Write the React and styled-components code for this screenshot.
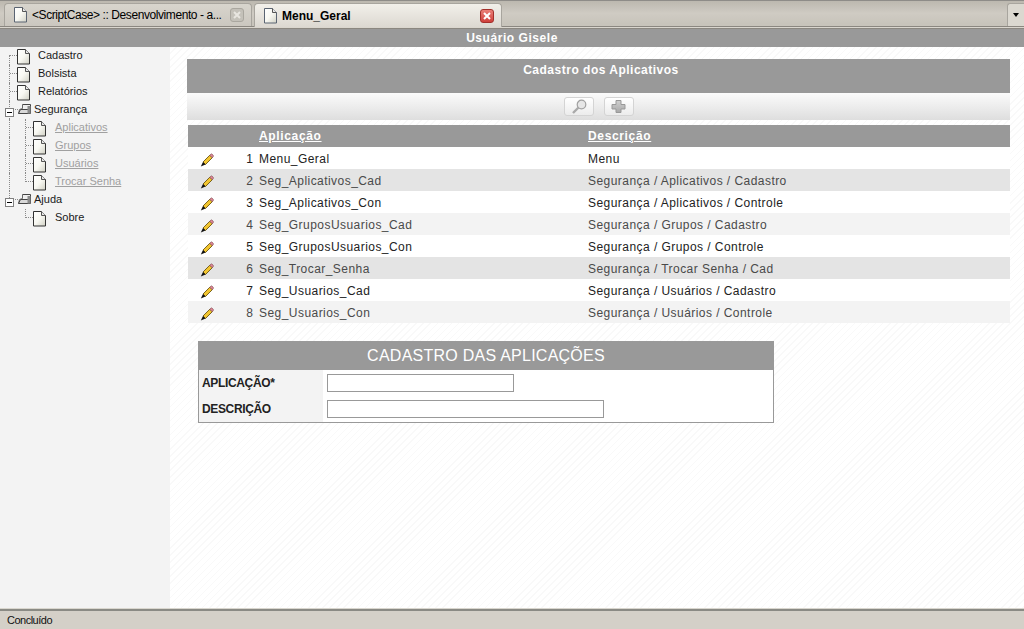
import React from 'react'
import styled, { createGlobalStyle } from 'styled-components'

const Global = createGlobalStyle`
  html, body { margin: 0; padding: 0; height: 100%; overflow: hidden; }
  body { font-family: "Liberation Sans", Arial, sans-serif; font-size: 12px; color: #000; }
  * { box-sizing: border-box; }
`

const Page = styled.div`
  width: 1024px;
  height: 629px;
  display: flex;
  flex-direction: column;
`

const TabBar = styled.div`
  height: 29px;
  display: flex;
  align-items: flex-end;
  padding: 0 0 2px 4px;
  gap: 2px;
  background: linear-gradient(#bcb8af, #cfcbc3 45%, #c8c4bb 85%);
  border-top: 1px solid #8e8c88;
  border-bottom: 1px solid #8b8780;
  box-shadow: inset 0 -1px 0 #dad6ce, inset 0 -2px 0 #8b8780;
`

const Tab = styled.div`
  width: 248px;
  height: ${p => p.$active ? 24 : 23}px;
  margin-bottom: ${p => p.$active ? -1 : 0}px;
  display: flex;
  align-items: center;
  padding: 0 7px 0 9px;
  border: 1px solid #a8a59e;
  border-bottom: 0;
  border-radius: 4px 4px 0 0;
  background: ${p => p.$active ? 'linear-gradient(#f2f0ea, #dcd8d1)' : 'linear-gradient(#d8d5cd, #cbc7bf)'};
  font-size: 12px;
  letter-spacing: ${p => p.$active ? '0' : '-0.42px'};
  font-weight: ${p => p.$active ? 700 : 400};
  white-space: nowrap;
`

const TabTitle = styled.span`
  flex: 1;
  margin-left: 5px;
`

const TabClose = styled.span`
  width: 14px;
  height: 14px;
  display: flex;
  align-items: center;
  justify-content: center;
  border-radius: 3px;
  border: 1px solid ${p => p.$active ? '#a3302b' : '#aaa79f'};
  background: ${p => p.$active ? 'linear-gradient(#ea8078, #cf3f3a)' : '#c4c1b9'};
`

const TabMenu = styled.div`
  margin-left: auto;
  width: 17px;
  height: 23px;
  display: flex;
  align-items: center;
  justify-content: center;
  border: 1px solid #a8a59e;
  border-right: 0;
  border-bottom: 0;
  border-radius: 3px 0 0 0;
  background: #dbd8d0;
  &::after {
    content: '';
    border: 3px solid transparent;
    border-top: 4px solid #000;
    border-bottom: 0;
  }
`

const TitleBar = styled.div`
  height: 18px;
  background: #999;
  color: #fff;
  text-align: center;
  font-weight: 700;
  font-size: 12px;
  line-height: 19px;
  letter-spacing: 0.55px;
`

const Body = styled.div`
  flex: 1;
  display: flex;
  min-height: 0;
`

const Sidebar = styled.nav`
  flex: none;
  width: 170px;
  background: #f3f3f3;
`

const TreeRow = styled.div`
  height: 18px;
  display: flex;
  align-items: flex-start;
`

const Guide = styled.span`
  position: relative;
  flex: none;
  width: ${p => p.$w}px;
  height: 18px;
  /* vertical part of the dotted connector */
  &::before {
    content: ${p => p.$blank ? 'none' : "''"};
    position: absolute;
    left: ${p => p.$x}px;
    top: ${p => p.$first ? 8 : 0}px;
    height: ${p => p.$last ? 9 : 18}px;
    border-left: 1px dotted #8a8a8a;
  }
  /* horizontal part */
  &::after {
    content: ${p => p.$branch ? "''" : 'none'};
    position: absolute;
    left: ${p => p.$x + 1}px;
    right: 0;
    top: 8px;
    border-top: 1px dotted #8a8a8a;
  }
`

const Minus = styled.span`
  position: absolute;
  z-index: 1;
  left: 5px;
  top: 7px;
  width: 9px;
  height: 9px;
  border: 1px solid #808080;
  background: #fff;
  &::after {
    content: '';
    position: absolute;
    left: 1px;
    right: 1px;
    top: 3px;
    border-top: 1px solid #000;
  }
`

const TreeLabel = styled.a`
  margin-left: ${p => p.$gap}px;
  line-height: 18px;
  margin-top: -1px;
  font-size: 11px;
  color: ${p => p.$muted ? '#a0a0a0' : '#1a1a1a'};
  text-decoration: ${p => p.$muted ? 'underline' : 'none'};
`

const Main = styled.main`
  flex: 1;
  min-width: 0;
  padding: 12px 14px 0 17px;
  background: repeating-linear-gradient(135deg, #fff 0, #fff 4px, #f9f9f9 4px, #f9f9f9 5px);
`

const GridHeader = styled.div`
  height: 34px;
  padding: 2px 0 0 5px;
  background: #999;
  color: #fff;
  text-align: center;
  font-weight: 700;
  font-size: 12px;
  line-height: 18px;
  letter-spacing: 0.5px;
`

const Toolbar = styled.div`
  height: 27px;
  display: flex;
  justify-content: center;
  align-items: center;
  gap: 10px;
  background: linear-gradient(#fbfbfb, #dedede);
`

const ToolButton = styled.button`
  width: 30px;
  height: 19px;
  padding: 0;
  display: flex;
  align-items: center;
  justify-content: center;
  border: 1px solid #d4d4d4;
  border-radius: 3px;
  background: linear-gradient(#fff, #ececec);
`

const Table = styled.table`
  margin: 5px 0 0 1px;
  width: 822px;
  border-collapse: collapse;
  table-layout: fixed;
  font-size: 12px;
  letter-spacing: 0.45px;
`

const Th = styled.th`
  height: 22px;
  padding: 0;
  background: #999;
  color: #fff;
  text-align: left;
  font-weight: 700;
  font-size: 12px;
  letter-spacing: 0.65px;
  text-decoration: underline;
`

const Row = styled.tr`
  height: 22px;
  background: ${p => ({ 0: '#fff', 1: '#e4e4e4', 2: '#fff', 3: '#f3f3f3' }[p.$tone])};
  color: ${p => p.$tone === 0 || p.$tone === 2 ? '#222' : '#4a4a4a'};
`

const Td = styled.td`
  padding: 1px 0 0;
  white-space: nowrap;
`

const NumCell = styled(Td)`
  text-align: right;
  padding-right: 6px;
  letter-spacing: 0;
`

const EditCell = styled.td`
  padding: 3px 0 0 12px;
  line-height: 0;
`

const FormBox = styled.form`
  width: 576px;
  margin: 18px 0 0 11px;
  border: 1px solid #999;
  border-top: 0;
  background: #fff;
`

const FormTitle = styled.div`
  height: 29px;
  margin: 0 -1px;
  background: #999;
  color: #fff;
  text-align: center;
  font-size: 16px;
  line-height: 29px;
  letter-spacing: 0.25px;
`

const FormRow = styled.div`
  height: 26px;
  display: flex;
  align-items: center;
  background: linear-gradient(90deg, #f3f3f3 124px, #fff 124px);
`

const FormLabel = styled.label`
  width: 128px;
  padding-left: 3px;
  font-weight: 700;
  font-size: 12px;
  letter-spacing: -0.35px;
  color: #222;
`

const Input = styled.input`
  width: ${p => p.$w}px;
  height: 18px;
  padding: 0;
  border: 1px solid #999;
  background: #fff;
`

const Status = styled.footer`
  height: 21px;
  padding-left: 7px;
  background: #d4d0c8;
  border-top: 1px solid #d9d6ce;
  box-shadow: inset 0 2px 0 #8a8a84;
  font-size: 11px;
  letter-spacing: -0.5px;
  line-height: 22px;
  color: #111;
`

const PageIcon = ({ inTab }) => (
  <svg width="13" height="16" viewBox="0 0 13 16" style={{ flex: 'none', marginTop: inTab ? 0 : 2 }}>
    <defs>
      <linearGradient id="pg" x1="0" y1="0" x2="1" y2="1">
        <stop offset="0" stopColor="#fff" />
        <stop offset="0.5" stopColor="#f8f8f2" />
        <stop offset="1" stopColor="#d0d0c4" />
      </linearGradient>
    </defs>
    <path d="M.5.5h8l4 4v10.500h-12z" fill="url(#pg)" stroke={inTab ? '#5a6472' : '#333'} />
    <path d="M8.500.5v4h4" fill="#e8e8e8" stroke="#555" />
  </svg>
)

const FolderIcon = () => (
  <svg width="13" height="13" viewBox="0 0 13 13" style={{ flex: 'none', marginTop: 2 }}>
    <path d="M4.500 1.500h8v9h-3" fill="#eee" stroke="#444" />
    <path d="M.5 10.500l1-4 3-1V1.500" fill="none" stroke="#666" />
    <path d="M.5 10.500l2-4h8v4z" fill="#d8d8d8" stroke="#444" />
    <path d="M9.500 3h3v7.500h-3z" fill="#8a8a8a" />
  </svg>
)

const PencilIcon = () => (
  <svg width="14" height="14" viewBox="0 0 14 14">
    <path d="M3 9L9.800 2.200l2.500 2.500L5.500 11.500z" fill="#f2c530" stroke="#5a4500" strokeWidth=".8" />
    <path d="M9.800 2.200l.9-.9c.5-.5 1-.5 1.500 0l.9.900c.5.5.5 1 0 1.500l-.9 1z" fill="#e58a9a" stroke="#7a4a50" strokeWidth=".7" />
    <path d="M3 9l2.500 2.500L.8 13.500z" fill="#111" />
  </svg>
)

const CloseIcon = ({ active }) => (
  <svg width="8" height="8" viewBox="0 0 8 8">
    <path d="M1 1l6 6M7 1L1 7" stroke={active ? '#fff' : '#e8e6e0'} strokeWidth="2" />
  </svg>
)

const SearchIcon = () => (
  <svg width="16" height="16" viewBox="0 0 16 16">
    <circle cx="10.500" cy="5.500" r="4.300" fill="#e6e6e6" stroke="#a0a0a0" strokeWidth="1.200" />
    <path d="M7.500 8.500L2 14" stroke="#aaa" strokeWidth="2.400" />
  </svg>
)

const PlusIcon = () => (
  <svg width="15" height="15" viewBox="0 0 15 15">
    <defs>
      <linearGradient id="pl" x1="0" y1="0" x2="0" y2="1">
        <stop offset="0" stopColor="#d0d0d0" />
        <stop offset="1" stopColor="#a8a8a8" />
      </linearGradient>
    </defs>
    <path d="M5 1.500h5v4h4v4.500h-4v3.500H5V10H1V5.500h4z" fill="url(#pl)" stroke="#999" />
  </svg>
)

const rows = [
  ['Menu_Geral', 'Menu', 0],
  ['Seg_Aplicativos_Cad', 'Segurança / Aplicativos / Cadastro', 1],
  ['Seg_Aplicativos_Con', 'Segurança / Aplicativos / Controle', 2],
  ['Seg_GruposUsuarios_Cad', 'Segurança / Grupos / Cadastro', 3],
  ['Seg_GruposUsuarios_Con', 'Segurança / Grupos / Controle', 2],
  ['Seg_Trocar_Senha', 'Segurança / Trocar Senha / Cad', 1],
  ['Seg_Usuarios_Cad', 'Segurança / Usuários / Cadastro', 2],
  ['Seg_Usuarios_Con', 'Segurança / Usuários / Controle', 3],
]

const Leaf = ({ label, first }) => (
  <TreeRow>
    <Guide $w={17} $x={9} $branch $first={first} />
    <PageIcon />
    <TreeLabel $gap={8}>{label}</TreeLabel>
  </TreeRow>
)

const Folder = ({ label, last }) => (
  <TreeRow>
    <Guide $w={18} $x={9} $branch $last={last}><Minus /></Guide>
    <FolderIcon />
    <TreeLabel $gap={3}>{label}</TreeLabel>
  </TreeRow>
)

const Child = ({ label, muted, lastChild, blank }) => (
  <TreeRow>
    <Guide $w={17} $x={9} $blank={blank} />
    <Guide $w={16} $x={8} $branch $last={lastChild} />
    <PageIcon />
    <TreeLabel $gap={9} $muted={muted}>{label}</TreeLabel>
  </TreeRow>
)

export default function App() {
  return (
    <Page>
      <Global />
      <TabBar>
        <Tab>
          <PageIcon inTab />
          <TabTitle>&lt;ScriptCase&gt; :: Desenvolvimento - a...</TabTitle>
          <TabClose><CloseIcon /></TabClose>
        </Tab>
        <Tab $active>
          <PageIcon inTab />
          <TabTitle>Menu_Geral</TabTitle>
          <TabClose $active><CloseIcon active /></TabClose>
        </Tab>
        <TabMenu />
      </TabBar>
      <TitleBar>Usuário Gisele</TitleBar>
      <Body>
        <Sidebar>
          <Leaf label="Cadastro" first />
          <Leaf label="Bolsista" />
          <Leaf label="Relatórios" />
          <Folder label="Segurança" />
          <Child label="Aplicativos" muted />
          <Child label="Grupos" muted />
          <Child label="Usuários" muted />
          <Child label="Trocar Senha" muted lastChild />
          <Folder label="Ajuda" last />
          <Child label="Sobre" lastChild blank />
        </Sidebar>
        <Main>
          <GridHeader>Cadastro dos Aplicativos</GridHeader>
          <Toolbar>
            <ToolButton type="button"><SearchIcon /></ToolButton>
            <ToolButton type="button"><PlusIcon /></ToolButton>
          </Toolbar>
          <Table>
            <colgroup>
              <col style={{ width: 40 }} />
              <col style={{ width: 31 }} />
              <col style={{ width: 329 }} />
              <col />
            </colgroup>
            <thead>
              <tr>
                <Th />
                <Th />
                <Th>Aplicação</Th>
                <Th>Descrição</Th>
              </tr>
            </thead>
            <tbody>
              {rows.map(([app, desc, tone], i) => (
                <Row key={app} $tone={tone}>
                  <EditCell><PencilIcon /></EditCell>
                  <NumCell>{i + 1}</NumCell>
                  <Td>{app}</Td>
                  <Td>{desc}</Td>
                </Row>
              ))}
            </tbody>
          </Table>
          <FormBox>
            <FormTitle>CADASTRO DAS APLICAÇÕES</FormTitle>
            <FormRow>
              <FormLabel>APLICAÇÃO*</FormLabel>
              <Input $w={187} />
            </FormRow>
            <FormRow>
              <FormLabel>DESCRIÇÃO</FormLabel>
              <Input $w={277} />
            </FormRow>
          </FormBox>
        </Main>
      </Body>
      <Status>Concluído</Status>
    </Page>
  )
}
